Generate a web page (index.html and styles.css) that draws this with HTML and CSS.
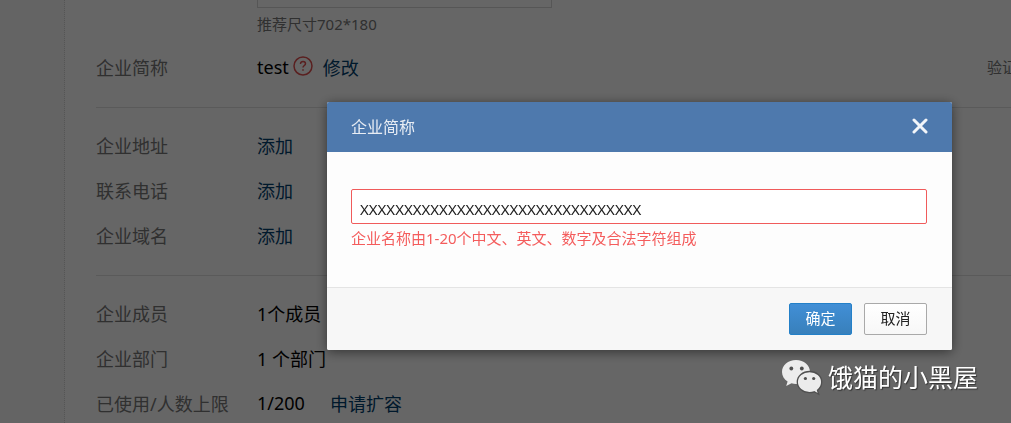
FILE: index.html
```html
<!DOCTYPE html>
<html lang="zh-CN">
<head>
    <meta charset="UTF-8" />
    <meta name="viewport" content="width=device-width, initial-scale=1" />
    <title>企业信息</title>
    <link rel="stylesheet" href="styles.css">
</head>
<body>
<div class="page">
    <aside class="sidebar"></aside>
    <main class="content">
        <section class="group group-first">
            <div class="logo-box"></div>
            <p class="hint">推荐尺寸702*180</p>
            <div class="row">
                <span class="label">企业简称</span>
                <span class="value">test</span>
                <svg class="help" viewBox="0 0 20 20" aria-hidden="true">
                    <circle cx="10" cy="10" r="9" />
                    <path d="M7.5 8C7.5 6.400 8.600 5.500 10 5.500S12.500 6.500 12.500 7.800C12.500 9.500 10 9.600 10 11.600M10 13.200V14.800" />
                </svg>
                <a class="link" href="#">修改</a>
                <a class="verify" href="#">验证</a>
            </div>
        </section>
        <section class="group">
            <div class="row"><span class="label">企业地址</span><a class="link" href="#">添加</a></div>
            <div class="row"><span class="label">联系电话</span><a class="link" href="#">添加</a></div>
            <div class="row"><span class="label">企业域名</span><a class="link" href="#">添加</a></div>
        </section>
        <section class="group">
            <div class="row"><span class="label">企业成员</span><span class="value">1个成员</span></div>
            <div class="row"><span class="label">企业部门</span><span class="value">1 个部门</span></div>
            <div class="row"><span class="label">已使用/人数上限</span><span class="value">1/200</span><a class="link link-expand" href="#">申请扩容</a></div>
        </section>
    </main>
</div>

<div class="mask">
    <form class="dialog" role="dialog" aria-labelledby="dialogTitle">
        <header class="dialog-head">
            <label id="dialogTitle" for="shortName">企业简称</label>
            <button class="close" type="button" aria-label="关闭">
                <svg viewBox="0 0 16 16" aria-hidden="true"><path d="M2 2L14 14M14 2L2 14" /></svg>
            </button>
        </header>
        <div class="dialog-body">
            <input class="text-input" id="shortName" type="text" value="XXXXXXXXXXXXXXXXXXXXXXXXXXXXXXXX" aria-describedby="nameError">
            <p class="error" id="nameError">企业名称由1-20个中文、英文、数字及合法字符组成</p>
        </div>
        <footer class="dialog-foot">
            <button class="btn btn-primary" type="button">确定</button>
            <button class="btn" type="button">取消</button>
        </footer>
    </form>
</div>

<div class="watermark">
    <svg viewBox="0 0 40 35" aria-hidden="true">
        <path class="bubble" d="M14 0C6 0 0 5.300 0 12C0 16 2.200 19.300 5.600 21.500L4.200 26L9.500 23.200C11 23.700 12.500 23.900 14 23.900C22 23.900 28 18.700 28 12S22 0 14 0Z" />
        <path class="bubble bubble-front" d="M27.500 11.500C20.700 11.500 15.300 16.200 15.300 22S20.700 32.600 27.500 32.600C29.200 32.600 30.800 32.300 32.200 31.800L36.700 34.200L35.500 30.200C38.100 28.300 39.700 25.300 39.700 22C39.700 16.200 34.300 11.500 27.500 11.500Z" />
        <circle cx="9.300" cy="8.500" r="1.900" /><circle cx="19.800" cy="8.500" r="1.900" />
        <circle cx="23.400" cy="18.500" r="1.600" /><circle cx="31.700" cy="18.500" r="1.600" />
    </svg>
    <span>饿猫的小黑屋</span>
</div>
</body>
</html>
```
FILE: styles.css
```css
* {
  box-sizing: border-box;
}
body {
  margin: 0;
  height: 100vh;
  overflow: hidden;
  background: #fff;
  color: #000;
  font-family: "Noto Sans", "Noto Sans CJK SC", sans-serif;
  font-size: 18px;
}
p {
  margin: 0;
}
a {
  text-decoration: none;
}
button,
input {
  font-family: inherit;
}

/* page under the mask */
.page {
  display: flex;
  min-height: 100vh;
}
.sidebar {
  flex: 0 0 65px;
  background: #fbfbfb;
  border-right: 1px dotted #d4d4d4;
}
.content {
  flex: 1;
  min-width: 0;
  padding-left: 31px;
}
.group {
  padding: 14px 0 18px;
}
.group + .group {
  border-top: 1px solid #e2e2e2;
}
.group-first {
  padding-top: 0;
}
.logo-box {
  width: 295px;
  height: 8px;
  margin-left: 161px;
  border: 1px solid #d8d8d8;
  border-top: 0;
}
.hint {
  margin-left: 161px;
  color: #787878;
  font-size: 15px;
  line-height: 32px;
  height: 36px;
}
.row {
  display: flex;
  align-items: center;
  height: 45px;
  white-space: nowrap;
}
.label {
  flex: 0 0 161px;
  color: #787878;
}
.link {
  color: #00406e;
}
.help {
  width: 20px;
  height: 20px;
  margin: 0 10px 2px 4px;
  fill: none;
  stroke: #e05050;
  stroke-width: 1.5;
}
.link-expand {
  margin-left: 25px;
}
.verify {
  margin-left: auto;
  margin-right: -6px;
  color: #787878;
  font-size: 15px;
}

/* dialog */
.mask {
  position: fixed;
  inset: 0;
  display: flex;
  justify-content: flex-end;
  align-items: flex-start;
  padding: 102px 59px 0;
  background: rgba(0, 0, 0, 0.6);
}
.dialog {
  width: 625px;
  overflow: hidden;
  border-radius: 2px;
  background: #fdfdfd;
  box-shadow: 0 2px 12px rgba(0, 0, 0, 0.5);
}
.dialog-head {
  display: flex;
  justify-content: space-between;
  align-items: center;
  height: 50px;
  padding: 0 24px 2px;
  background: #4e79ad;
  color: #e8edf4;
  font-size: 16px;
}
.close {
  display: flex;
  padding: 0;
  border: 0;
  background: none;
  cursor: pointer;
}
.close svg {
  width: 16px;
  height: 16px;
  fill: none;
  stroke: #f2f5f9;
  stroke-width: 3;
  stroke-linecap: round;
}
.dialog-body {
  height: 135px;
  padding: 37px 25px 0 24px;
}
.text-input {
  display: block;
  width: 100%;
  height: 35px;
  padding: 4px 8px 0;
  border: 1px solid #f05b5b;
  border-radius: 2px;
  background: #fff;
  color: #222;
  font-size: 15px;
  outline: 0;
}
.error {
  color: #f45c5c;
  font-size: 15px;
  line-height: 28px;
}
.dialog-foot {
  display: flex;
  justify-content: flex-end;
  gap: 12px;
  padding: 15px 25px;
  border-top: 1px solid #e4e4e4;
  background: #f7f7f7;
}
.btn {
  width: 63px;
  height: 32px;
  padding: 0 0 4px;
  border: 1px solid #a9a9a9;
  border-radius: 2px;
  background: linear-gradient(#fff, #f7f7f7);
  color: #222;
  font-size: 15px;
  cursor: pointer;
}
.btn-primary {
  border-color: #2380c8;
  background: linear-gradient(#418fd6, #3880bb);
  color: #fff;
}

.watermark {
  position: fixed;
  right: 33px;
  bottom: 26px;
  display: flex;
  align-items: center;
  gap: 6px;
  color: #fff;
  font-size: 25px;
  line-height: 40px;
  text-shadow: 1px 1px 1px #333;
}
.watermark svg {
  width: 40px;
  height: 35px;
  overflow: visible;
  fill: #505050;
}
.watermark .bubble {
  fill: #ececec;
}
.watermark .bubble-front {
  stroke: #505050;
  stroke-width: 1.3;
}
```
